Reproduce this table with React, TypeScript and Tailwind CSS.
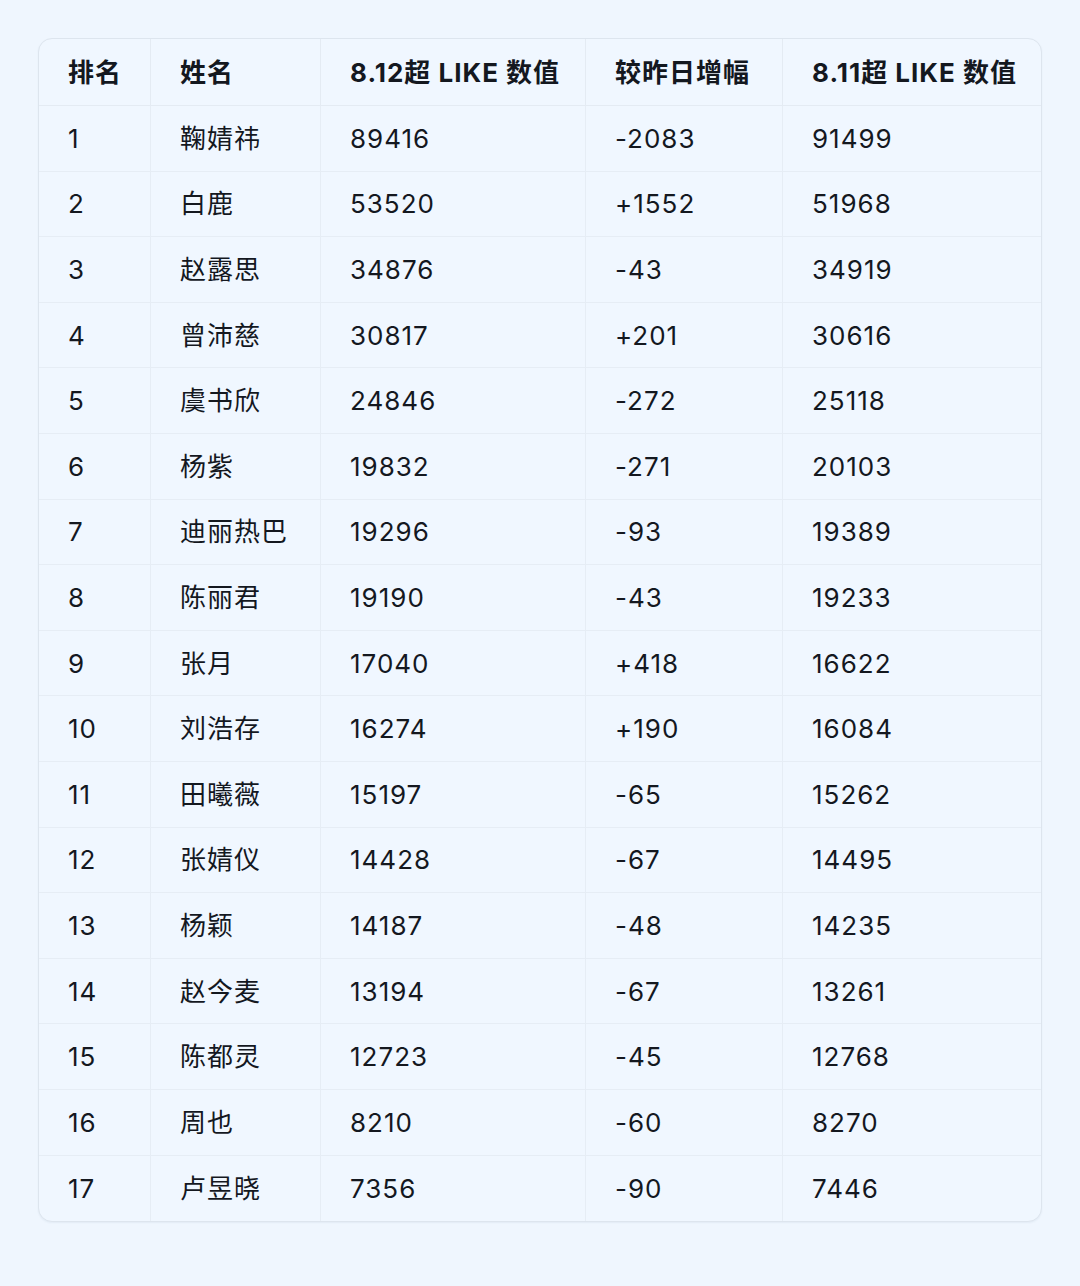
const rows: [string, string, string, string, string][] = [
  ["1", "鞠婧祎", "89416", "-2083", "91499"],
  ["2", "白鹿", "53520", "+1552", "51968"],
  ["3", "赵露思", "34876", "-43", "34919"],
  ["4", "曾沛慈", "30817", "+201", "30616"],
  ["5", "虞书欣", "24846", "-272", "25118"],
  ["6", "杨紫", "19832", "-271", "20103"],
  ["7", "迪丽热巴", "19296", "-93", "19389"],
  ["8", "陈丽君", "19190", "-43", "19233"],
  ["9", "张月", "17040", "+418", "16622"],
  ["10", "刘浩存", "16274", "+190", "16084"],
  ["11", "田曦薇", "15197", "-65", "15262"],
  ["12", "张婧仪", "14428", "-67", "14495"],
  ["13", "杨颖", "14187", "-48", "14235"],
  ["14", "赵今麦", "13194", "-67", "13261"],
  ["15", "陈都灵", "12723", "-45", "12768"],
  ["16", "周也", "8210", "-60", "8270"],
  ["17", "卢昱晓", "7356", "-90", "7446"],
];

const headers = ["排名", "姓名", "8.12超 LIKE 数值", "较昨日增幅", "8.11超 LIKE 数值"];

const cols = "grid grid-cols-[112px_170px_265px_197px_1fr]";

export default function App() {
  return (
    <div
      className="min-h-[1286px] w-[1080px] bg-[#eff6fe] pt-[38px] px-[38px] text-[#14181f]"
      style={{ fontFamily: "Inter, 'Noto Sans CJK SC', sans-serif" }}
    >
      <div className="overflow-hidden rounded-[14px] border border-[#dde5ee] bg-[#f0f7ff] shadow-[0_1px_2px_rgba(30,60,100,0.06)]">
        <div className={`${cols} h-[67px] border-b border-[#e4ebf3]`}>
          {headers.map((h, i) => (
            <div
              key={h}
              className={`flex items-center pl-[29px] text-[26px] font-bold tracking-[1px] ${
                i < 4 ? "border-r border-[#e4ebf3]" : ""
              }`}
            >
              {h}
            </div>
          ))}
        </div>
        {rows.map((r, ri) => (
          <div
            key={r[0]}
            className={`${cols} h-[65.6px] ${
              ri < rows.length - 1 ? "border-b border-[#e6edf5]" : ""
            }`}
          >
            {r.map((c, i) => (
              <div
                key={i}
                className={`flex items-center pl-[29px] text-[26px] tracking-[1px] ${
                  i < 4 ? "border-r border-[#e6edf5]" : ""
                }`}
              >
                {c}
              </div>
            ))}
          </div>
        ))}
      </div>
    </div>
  );
}
